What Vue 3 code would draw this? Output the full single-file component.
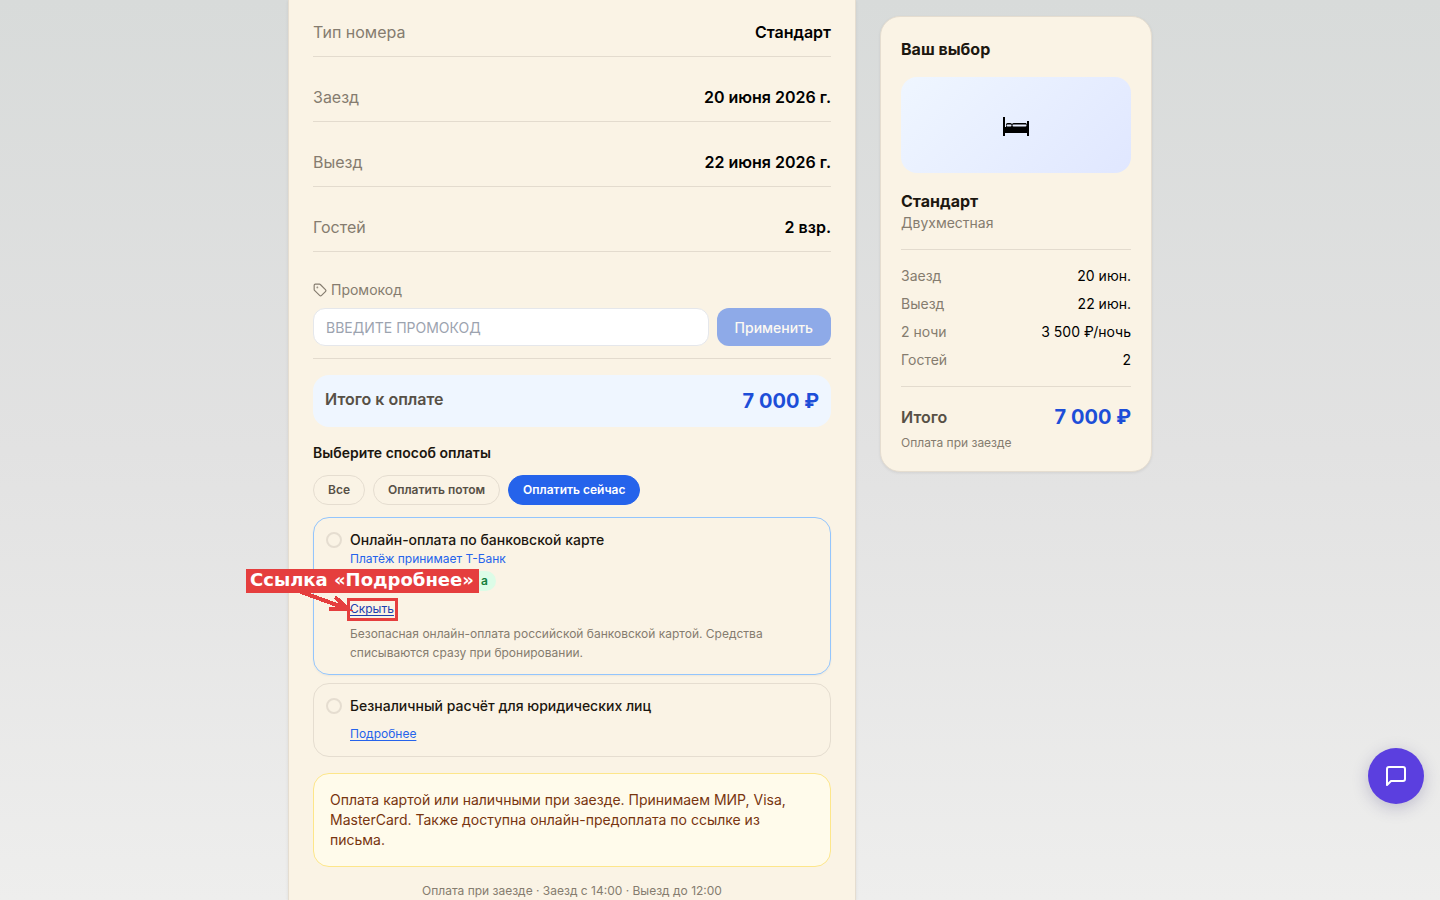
<template>
  <div class="page">
    <div class="layout">
      <main class="booking">
        <div v-for="row in details" :key="row.label" class="detail-row">
          <span class="detail-label">{{ row.label }}</span>
          <span class="detail-value">{{ row.value }}</span>
        </div>

        <form class="promo" @submit.prevent>
          <label for="promo" class="promo-label">
            <svg width="14" height="14" viewBox="0 0 24 24" fill="none" stroke="currentColor" stroke-width="2" stroke-linecap="round" stroke-linejoin="round">
              <path d="M12.586 2.586A2 2 0 0 0 11.172 2H4a2 2 0 0 0-2 2v7.172a2 2 0 0 0 .586 1.414l8.704 8.704a2.426 2.426 0 0 0 3.42 0l6.58-6.58a2.426 2.426 0 0 0 0-3.42z" />
              <circle cx="7.5" cy="7.5" r=".5" fill="currentColor" />
            </svg>
            Промокод
          </label>
          <div class="promo-row">
            <input id="promo" v-model.trim="promo" type="text" placeholder="ВВЕДИТЕ ПРОМОКОД" />
            <button type="submit" :disabled="!promo">Применить</button>
          </div>
        </form>

        <div class="total">
          <span class="total-label">Итого к оплате</span>
          <span class="price">7 000 ₽</span>
        </div>

        <h3>Выберите способ оплаты</h3>
        <div class="filters">
          <button
            v-for="f in filters"
            :key="f"
            type="button"
            :class="{ active: filter === f }"
            @click="filter = f"
          >
            {{ f }}
          </button>
        </div>

        <div class="methods">
          <div class="method highlighted">
            <input id="card" v-model="method" type="radio" name="method" value="card" />
            <div class="method-body">
              <label for="card">Онлайн-оплата по банковской карте</label>
              <p class="provider">Платёж принимает Т-Банк</p>
              <span class="badge">а</span>
              <div class="more">
                <a href="#" class="hovered" @click.prevent>Скрыть</a>
                <!-- выноска к ссылке -->
                <span class="mark-frame"></span>
                <svg class="mark-arrow" width="56" height="28" viewBox="0 0 56 28" fill="none" stroke="#e53e3e" stroke-width="4" shape-rendering="crispEdges">
                  <path d="M2 3 49 20" />
                  <path d="M36 8 49 20H30" />
                </svg>
                <span class="mark-label">Ссылка «Подробнее»</span>
              </div>
              <p class="method-text">
                Безопасная онлайн-оплата российской банковской картой. Средства списываются сразу при бронировании.
              </p>
            </div>
          </div>

          <div class="method">
            <input id="invoice" v-model="method" type="radio" name="method" value="invoice" />
            <div class="method-body">
              <label for="invoice">Безналичный расчёт для юридических лиц</label>
              <div class="more">
                <a href="#" @click.prevent>Подробнее</a>
              </div>
            </div>
          </div>
        </div>

        <p class="notice">
          Оплата картой или наличными при заезде. Принимаем МИР, Visa, MasterCard. Также доступна онлайн-предоплата по ссылке из письма.
        </p>
        <p class="footnote">Оплата при заезде · Заезд с 14:00 · Выезд до 12:00</p>
      </main>

      <aside class="summary">
        <h2>Ваш выбор</h2>
        <div class="room-image">
          <svg width="28" height="24" viewBox="0 -4 28 24">
            <path d="M1 0h2v10h22V4h2v15h-2v-3H3v3H1z" />
            <path d="M4 7.5a1.5 1.5 0 0 1 1.5-1.5h3a1.5 1.5 0 0 1 1.5 1.5V11H4z" />
            <path d="M10 11V7.5a1.5 1.5 0 0 1 1.5-1.5H24l1 1.5V11z" />
            <path d="M5.500 8.500h3M11.500 8.500H23.500" stroke="#e7edff" stroke-width="2" stroke-linecap="round" />
          </svg>
        </div>
        <h2>Стандарт</h2>
        <p class="room-type">Двухместная</p>
        <div class="summary-list">
          <div v-for="item in summary" :key="item.label" class="summary-row">
            <span>{{ item.label }}</span>
            <span class="summary-value">{{ item.value }}</span>
          </div>
        </div>
        <div class="summary-total">
          <span class="total-label">Итого</span>
          <span class="price">7 000 ₽</span>
        </div>
        <p class="pay-note">Оплата при заезде</p>
      </aside>
    </div>

    <button type="button" class="chat" aria-label="Чат">
      <svg width="24" height="24" viewBox="0 0 24 24" fill="none" stroke="currentColor" stroke-width="2" stroke-linecap="round" stroke-linejoin="round">
        <path d="M21 15a2 2 0 0 1-2 2H7l-4 4V5a2 2 0 0 1 2-2h14a2 2 0 0 1 2 2z" />
      </svg>
    </button>
  </div>
</template>

<script setup>
import { ref } from 'vue';

const promo = ref('');
const method = ref('');
const filter = ref('Оплатить сейчас');
const filters = ['Все', 'Оплатить потом', 'Оплатить сейчас'];

const details = [
  { label: 'Тип номера', value: 'Стандарт' },
  { label: 'Заезд', value: '20 июня 2026 г.' },
  { label: 'Выезд', value: '22 июня 2026 г.' },
  { label: 'Гостей', value: '2 взр.' },
];

const summary = [
  { label: 'Заезд', value: '20 июн.' },
  { label: 'Выезд', value: '22 июн.' },
  { label: '2 ночи', value: '3 500 ₽/ночь' },
  { label: 'Гостей', value: '2' },
];
</script>

<style>
body {
  margin: 0;
}
</style>

<style scoped>
.page {
  height: 100vh;
  overflow: hidden;
  background: linear-gradient(#d8dbda, #e2e2e2 50%, #eeeeed);
  font-family: Inter, "Liberation Sans", sans-serif;
  font-size: 14px;
  line-height: 20px;
  color: #000;
}
.page * {
  box-sizing: border-box;
}
h2,
h3,
p {
  margin: 0;
}
button,
input {
  font-family: inherit;
}
button {
  cursor: pointer;
}
.layout {
  display: grid;
  grid-template-columns: repeat(3, 1fr);
  column-gap: 24px;
  max-width: 864px;
  height: 100%;
  margin: 0 auto;
}
.layout > * {
  min-width: 0;
}
.booking {
  grid-column: span 2;
  padding: 8px 24px 0;
  background: #faf3e5;
  border: solid #e5ddd0;
  border-width: 0 1px;
  box-shadow: 0 1px 3px rgba(0, 0, 0, 0.08);
}
.detail-row {
  display: flex;
  justify-content: space-between;
  padding: 12px 0;
  margin-bottom: 16px;
  border-bottom: 1px solid #e3dbce;
  font-size: 16px;
  line-height: 24px;
}
.detail-label {
  color: #857c6f;
}
.detail-value {
  font-weight: 600;
}

/* Промокод */
.promo {
  padding: 12px 0;
  border-bottom: 1px solid #e3dbce;
}
.promo-label {
  display: flex;
  align-items: center;
  gap: 4px;
  margin-bottom: 8px;
  color: #857c6f;
}
.promo-row {
  display: flex;
  gap: 8px;
}
.promo-row input {
  flex: 1;
  min-width: 0;
  height: 38px;
  padding: 0 12px;
  border: 1px solid #e5e7eb;
  border-radius: 12px;
  background: #fff;
  font-size: 14px;
}
.promo-row input::placeholder {
  color: #9ca3af;
}
.promo-row button {
  padding: 0 18px;
  border: none;
  border-radius: 12px;
  background: #2563eb;
  color: #fff;
  font-size: 14px;
  font-weight: 500;
}
.promo-row button:disabled {
  opacity: 0.5;
}

.total {
  display: flex;
  justify-content: space-between;
  align-items: flex-start;
  margin: 16px 0;
  padding: 12px;
  border-radius: 16px;
  background: #eff6ff;
}
.total-label {
  font-size: 16px;
  line-height: 24px;
  font-weight: 600;
  color: #575046;
}
.price {
  font-size: 20px;
  line-height: 28px;
  font-weight: 700;
  color: #1d4ed8;
}

h3 {
  margin-bottom: 12px;
  font-size: 14px;
  font-weight: 600;
  color: #1c1710;
}
.filters {
  display: flex;
  flex-wrap: wrap;
  gap: 8px;
  margin-bottom: 12px;
}
.filters button {
  padding: 6px 14px;
  border: 1px solid #e5ddd0;
  border-radius: 15px;
  background: transparent;
  font-size: 12px;
  line-height: 16px;
  font-weight: 600;
  color: #575046;
}
.filters button.active {
  border-color: #2563eb;
  background: #2563eb;
  color: #fff;
}

/* Способы оплаты */
.methods {
  display: flex;
  flex-direction: column;
  gap: 8px;
}
.method {
  display: flex;
  gap: 8px;
  padding: 12px;
  border: 1px solid #e5ddd0;
  border-radius: 16px;
}
.method.highlighted {
  border-color: #93c5fd;
  box-shadow: 0 1px 2px rgba(0, 0, 0, 0.05);
}
.method input {
  appearance: none;
  flex: none;
  width: 16px;
  height: 16px;
  margin: 2px 0 0;
  border: 2px solid #e5ddd0;
  border-radius: 50%;
}
.method input:checked {
  border: 5px solid #2563eb;
}
.method-body {
  flex: 1;
  min-width: 0;
}
.method label {
  display: block;
  font-weight: 500;
  color: #1c1710;
}
.provider {
  margin-bottom: 4px;
  font-size: 12px;
  line-height: 17px;
  color: #2563eb;
}
.badge {
  display: block;
  width: 146px;
  padding: 0 8px;
  border-radius: 10px;
  background: #dcfce7;
  font-size: 12px;
  font-weight: 600;
  text-align: right;
  color: #15803d;
}
.more {
  position: relative;
  width: fit-content;
  margin-top: 8px;
}
.more a {
  display: block;
  font-size: 12px;
  text-decoration: underline;
  text-underline-offset: 2px;
  color: #2563eb;
}
.more a.hovered {
  color: #1e40af;
}
.method-text {
  margin-top: 5px;
  font-size: 12px;
  line-height: 19px;
  color: #857c6f;
}
.mark-frame {
  position: absolute;
  top: -1px;
  left: -3px;
  width: 51px;
  height: 23px;
  border: 3px solid #e53e3e;
}
.mark-arrow {
  position: absolute;
  top: -10px;
  left: -51px;
}
.mark-label {
  position: absolute;
  top: -30px;
  left: -104px;
  padding: 0 5px 2px 4px;
  background: #e53e3e;
  color: #fff;
  font: bold 18px/22px "DejaVu Sans", sans-serif;
  white-space: nowrap;
}

.notice {
  margin: 16px 0;
  padding: 16px;
  border: 1px solid #fde68a;
  border-radius: 16px;
  background: #fffbeb;
  color: #78350f;
}
.footnote {
  font-size: 12px;
  line-height: 16px;
  text-align: center;
  color: #857c6f;
}

.summary {
  align-self: start;
  margin-top: 16px;
  padding: 20px;
  background: #faf3e5;
  border: 1px solid #e5ddd0;
  border-radius: 20px;
  box-shadow: 0 1px 3px rgba(0, 0, 0, 0.08);
}
h2 {
  font-size: 16px;
  line-height: 24px;
  font-weight: 700;
  color: #1c1710;
}
.room-image {
  display: flex;
  align-items: center;
  justify-content: center;
  height: 96px;
  margin: 16px 0;
  border-radius: 16px;
  background: linear-gradient(135deg, #eff6ff, #e0e7ff);
}
.room-type {
  color: #857c6f;
}
.summary-list {
  display: flex;
  flex-direction: column;
  gap: 8px;
  margin: 16px 0;
  padding: 16px 0;
  border: solid #e3dbce;
  border-width: 1px 0;
}
.summary-row {
  display: flex;
  justify-content: space-between;
  color: #857c6f;
}
.summary-value {
  color: #000;
}
.summary-total {
  display: flex;
  justify-content: space-between;
  align-items: center;
  margin-bottom: 4px;
}
.pay-note {
  font-size: 12px;
  line-height: 16px;
  color: #857c6f;
}

.chat {
  position: fixed;
  right: 16px;
  bottom: 96px;
  display: flex;
  align-items: center;
  justify-content: center;
  width: 56px;
  height: 56px;
  padding: 0;
  border: none;
  border-radius: 50%;
  background: #5b3fdf;
  color: #fff;
  box-shadow: 0 4px 16px rgba(60, 50, 120, 0.25);
}
</style>
